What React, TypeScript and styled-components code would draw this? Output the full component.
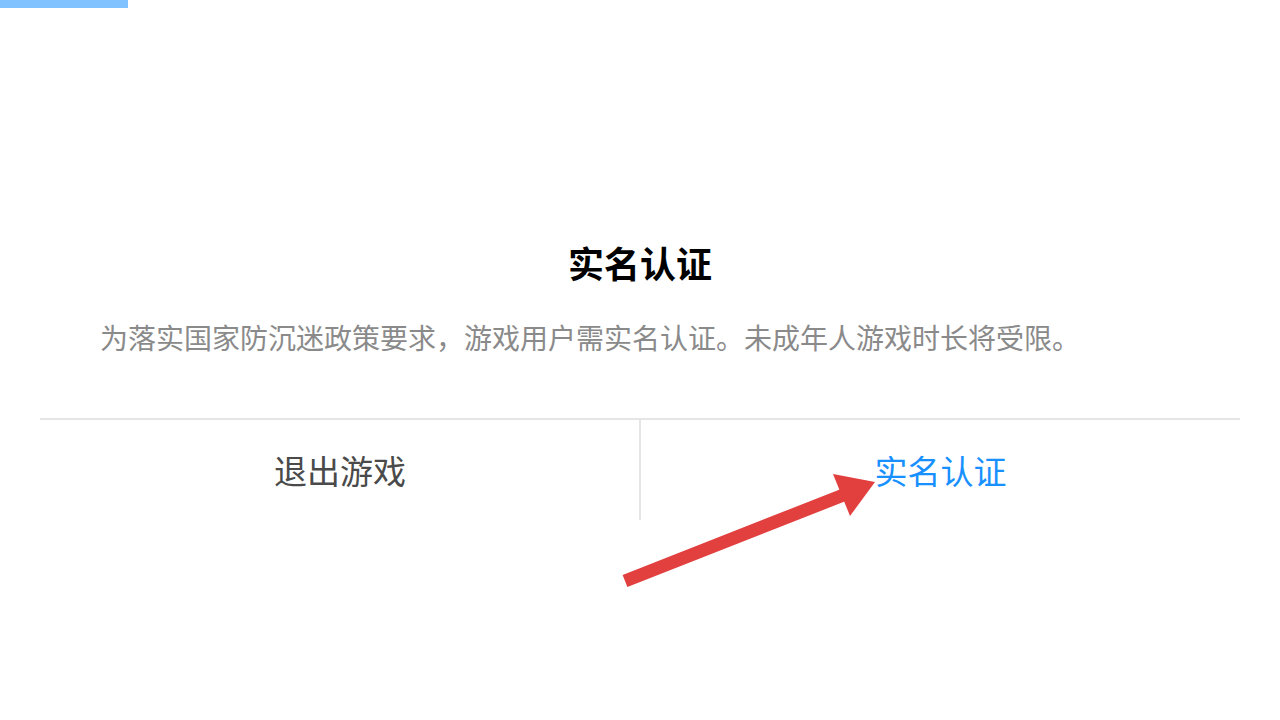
import styled, { createGlobalStyle } from "styled-components";

const GlobalStyle = createGlobalStyle`
  html, body {
    margin: 0;
    padding: 0;
    background: #ffffff;
  }
  body {
    font-family: "Noto Sans CJK SC", "Noto Sans", sans-serif;
  }
`;

const Page = styled.div`
  position: relative;
  width: 1280px;
  height: 720px;
  overflow: hidden;
  background: #ffffff;
`;

const Progress = styled.div`
  width: 128px;
  height: 8px;
  background: #80c1ff;
`;

const Dialog = styled.div`
  margin: 0 40px;
  padding-top: 236px;
  display: flex;
  flex-direction: column;
`;

const Title = styled.h2`
  margin: 0;
  font-size: 36px;
  line-height: 36px;
  font-weight: 700;
  color: #000000;
  text-align: center;
`;

const Message = styled.p`
  margin: 43px 0 0;
  padding: 0 60px;
  font-size: 28px;
  line-height: 28px;
  color: #8a8a8a;
`;

const Footer = styled.div`
  margin-top: 67px;
  border-top: 2px solid #e5e5e5;
  display: grid;
  grid-template-columns: 1fr 1fr;
  height: 100px;
`;

const Action = styled.button<{ $primary?: boolean }>`
  border: none;
  border-left: ${(p) => (p.$primary ? "2px solid #e5e5e5" : "none")};
  margin-left: ${(p) => (p.$primary ? "-1px" : "0")};
  background: transparent;
  padding: 0;
  font-family: inherit;
  font-size: 33px;
  line-height: 33px;
  color: ${(p) => (p.$primary ? "#1890ff" : "#4a4a4a")};
  display: flex;
  align-items: center;
  justify-content: center;
  cursor: pointer;
`;

const Pointer = styled.svg`
  position: absolute;
  left: 0;
  top: 0;
  pointer-events: none;
`;

export default function App() {
  return (
    <Page>
      <GlobalStyle />
      <Progress />
      <Dialog>
        <Title>实名认证</Title>
        <Message>
          为落实国家防沉迷政策要求，游戏用户需实名认证。未成年人游戏时长将受限。
        </Message>
        <Footer>
          <Action>退出游戏</Action>
          <Action $primary>实名认证</Action>
        </Footer>
      </Dialog>
      <Pointer width="1280" height="720" viewBox="0 0 1280 720">
        <line x1="625" y1="581" x2="846" y2="494" stroke="#e23f3f" strokeWidth="13" />
        <polygon points="875,482 833,474 850,516" fill="#e23f3f" />
      </Pointer>
    </Page>
  );
}
